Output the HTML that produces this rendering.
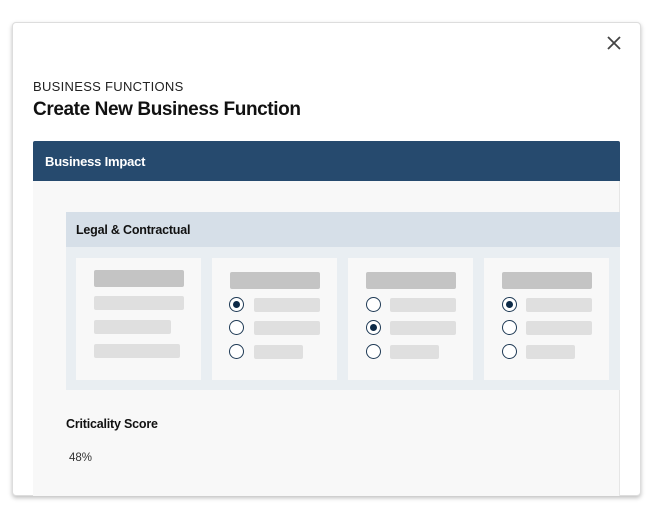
<!DOCTYPE html>
<html><head><style>
*{margin:0;padding:0;box-sizing:border-box}
body{width:657px;height:513px;background:#fff;font-family:"Liberation Sans",sans-serif;position:relative;overflow:hidden}
.modal{position:absolute;left:12px;top:22px;width:629px;height:474px;background:#fff;border:1px solid #ddd;border-radius:4px;box-shadow:0 2px 4px rgba(0,0,0,.25);overflow:hidden}
.a{position:absolute}
.bar{position:absolute;border-radius:2px;background:#dfdfdf}
.hb{background:#c4c4c4;height:17px}
.card{position:absolute;top:258px;width:125px;height:122px;background:#f8f8f8}
.r{position:absolute;width:15px;height:15px;border:1.5px solid #1f3a55;border-radius:50%;background:#fff}
.r.on::after{content:"";position:absolute;left:2.5px;top:2.5px;width:7px;height:7px;border-radius:50%;background:#0d2a47}
</style></head><body>
<div class="modal"></div>
<svg class="a" style="left:606px;top:35px" width="16" height="16"><path d="M2 2L14 14M14 2L2 14" stroke="#444" stroke-width="1.8"/></svg>
<div class="a" style="left:33px;top:79px;font-size:13px;letter-spacing:.3px;color:#222">BUSINESS FUNCTIONS</div>
<div class="a" style="left:33px;top:99px;font-size:19px;letter-spacing:-0.4px;font-weight:bold;color:#111">Create New Business Function</div>
<div class="a" style="left:33px;top:141px;width:587px;height:40px;background:#264a6e;border-radius:2px 2px 0 0"></div>
<div class="a" style="left:45px;top:154px;font-size:13px;font-weight:bold;color:#fff;letter-spacing:-0.2px">Business Impact</div>
<div class="a" style="left:33px;top:181px;width:587px;height:315px;background:#f8f8f8;border-right:1px solid #e6e6e6"></div>
<div class="a" style="left:66px;top:212px;width:554px;height:35px;background:#d6dfe8"></div>
<div class="a" style="left:76px;top:223px;font-size:12.5px;font-weight:bold;color:#111;letter-spacing:-0.2px">Legal &amp; Contractual</div>
<div class="a" style="left:66px;top:247px;width:554px;height:143px;background:#e9eef2"></div>
<div class="card" style="left:76px"></div>
<div class="card" style="left:212px"></div>
<div class="card" style="left:348px"></div>
<div class="card" style="left:484px"></div>
<div class="bar hb" style="left:94px;top:270px;width:90px"></div>
<div class="bar" style="left:94px;top:296px;width:90px;height:14px"></div>
<div class="bar" style="left:94px;top:320px;width:77px;height:14px"></div>
<div class="bar" style="left:94px;top:344px;width:86px;height:14px"></div>

<div class="bar hb" style="left:230px;top:272px;width:90px"></div>
<div class="r on" style="left:229px;top:297px"></div><div class="bar" style="left:254px;top:298px;width:66px;height:14px"></div>
<div class="r" style="left:229px;top:320px"></div><div class="bar" style="left:254px;top:321px;width:66px;height:14px"></div>
<div class="r" style="left:229px;top:344px"></div><div class="bar" style="left:254px;top:345px;width:49px;height:14px"></div>

<div class="bar hb" style="left:366px;top:272px;width:90px"></div>
<div class="r" style="left:366px;top:297px"></div><div class="bar" style="left:390px;top:298px;width:66px;height:14px"></div>
<div class="r on" style="left:366px;top:320px"></div><div class="bar" style="left:390px;top:321px;width:66px;height:14px"></div>
<div class="r" style="left:366px;top:344px"></div><div class="bar" style="left:390px;top:345px;width:49px;height:14px"></div>

<div class="bar hb" style="left:502px;top:272px;width:90px"></div>
<div class="r on" style="left:502px;top:297px"></div><div class="bar" style="left:526px;top:298px;width:66px;height:14px"></div>
<div class="r" style="left:502px;top:320px"></div><div class="bar" style="left:526px;top:321px;width:66px;height:14px"></div>
<div class="r" style="left:502px;top:344px"></div><div class="bar" style="left:526px;top:345px;width:49px;height:14px"></div>

<div class="a" style="left:66px;top:417px;font-size:12.5px;font-weight:bold;color:#111;letter-spacing:-0.2px">Criticality Score</div>
<div class="a" style="left:69px;top:452px;font-size:11.5px;color:#333">48%</div>
</body></html>
